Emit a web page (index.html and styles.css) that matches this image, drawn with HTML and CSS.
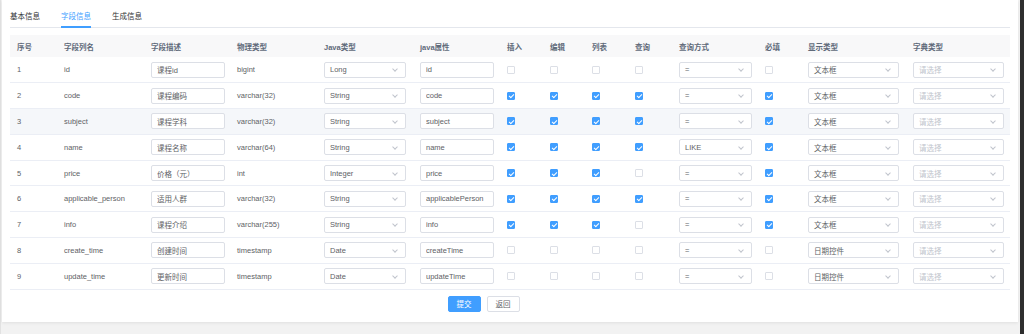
FILE: index.html
```html
<!DOCTYPE html>
<html lang="zh-CN">
<head>
    <meta charset="UTF-8">
    <meta name="viewport" content="width=device-width, initial-scale=1.0">
    <title>修改生成配置</title>
    <link rel="stylesheet" href="styles.css">
</head>
<body>
    <div class="main">
        <div class="card">
            <div class="tabs">
                <div class="tab first">基本信息</div>
                <div class="tab active">字段信息</div>
                <div class="tab last">生成信息</div>
            </div>

            <table class="fields">
                <colgroup>
                    <col style="width:47px"><col style="width:87px"><col style="width:86px"><col style="width:87px">
                    <col style="width:96px"><col style="width:87px"><col style="width:43px"><col style="width:42px">
                    <col style="width:43px"><col style="width:44px"><col style="width:86px"><col style="width:43px">
                    <col style="width:105px"><col style="width:104px">
                </colgroup>
                <thead>
                    <tr>
                        <th>序号</th><th>字段列名</th><th>字段描述</th><th>物理类型</th><th>Java类型</th><th>java属性</th>
                        <th>插入</th><th>编辑</th><th>列表</th><th>查询</th><th>查询方式</th><th>必填</th><th>显示类型</th><th>字典类型</th>
                    </tr>
                </thead>
                <tbody>
                    <tr>
                        <td>1</td><td>id</td>
                        <td><input class="input w-desc" value="课程id"></td>
                        <td>bigint</td>
                        <td><div class="select w-java"><span>Long</span></div></td>
                        <td><input class="input w-desc" value="id"></td>
                        <td><span class="checkbox"></span></td><td><span class="checkbox"></span></td>
                        <td><span class="checkbox"></span></td><td><span class="checkbox"></span></td>
                        <td><div class="select w-query"><span>=</span></div></td>
                        <td><span class="checkbox"></span></td>
                        <td><div class="select w-show"><span class="dark">文本框</span></div></td>
                        <td><div class="select w-show"><span class="placeholder">请选择</span></div></td>
                    </tr>
                    <tr>
                        <td>2</td><td>code</td>
                        <td><input class="input w-desc" value="课程编码"></td>
                        <td>varchar(32)</td>
                        <td><div class="select w-java"><span>String</span></div></td>
                        <td><input class="input w-desc" value="code"></td>
                        <td><span class="checkbox checked"></span></td><td><span class="checkbox checked"></span></td>
                        <td><span class="checkbox checked"></span></td><td><span class="checkbox checked"></span></td>
                        <td><div class="select w-query"><span>=</span></div></td>
                        <td><span class="checkbox checked"></span></td>
                        <td><div class="select w-show"><span class="dark">文本框</span></div></td>
                        <td><div class="select w-show"><span class="placeholder">请选择</span></div></td>
                    </tr>
                    <tr class="hover">
                        <td>3</td><td>subject</td>
                        <td><input class="input w-desc" value="课程学科"></td>
                        <td>varchar(32)</td>
                        <td><div class="select w-java"><span>String</span></div></td>
                        <td><input class="input w-desc" value="subject"></td>
                        <td><span class="checkbox checked"></span></td><td><span class="checkbox checked"></span></td>
                        <td><span class="checkbox checked"></span></td><td><span class="checkbox checked"></span></td>
                        <td><div class="select w-query"><span>=</span></div></td>
                        <td><span class="checkbox checked"></span></td>
                        <td><div class="select w-show"><span class="dark">文本框</span></div></td>
                        <td><div class="select w-show"><span class="placeholder">请选择</span></div></td>
                    </tr>
                    <tr>
                        <td>4</td><td>name</td>
                        <td><input class="input w-desc" value="课程名称"></td>
                        <td>varchar(64)</td>
                        <td><div class="select w-java"><span>String</span></div></td>
                        <td><input class="input w-desc" value="name"></td>
                        <td><span class="checkbox checked"></span></td><td><span class="checkbox checked"></span></td>
                        <td><span class="checkbox checked"></span></td><td><span class="checkbox checked"></span></td>
                        <td><div class="select w-query"><span>LIKE</span></div></td>
                        <td><span class="checkbox checked"></span></td>
                        <td><div class="select w-show"><span class="dark">文本框</span></div></td>
                        <td><div class="select w-show"><span class="placeholder">请选择</span></div></td>
                    </tr>
                    <tr>
                        <td>5</td><td>price</td>
                        <td><input class="input w-desc" value="价格（元）"></td>
                        <td>int</td>
                        <td><div class="select w-java"><span>Integer</span></div></td>
                        <td><input class="input w-desc" value="price"></td>
                        <td><span class="checkbox checked"></span></td><td><span class="checkbox checked"></span></td>
                        <td><span class="checkbox checked"></span></td><td><span class="checkbox"></span></td>
                        <td><div class="select w-query"><span>=</span></div></td>
                        <td><span class="checkbox checked"></span></td>
                        <td><div class="select w-show"><span class="dark">文本框</span></div></td>
                        <td><div class="select w-show"><span class="placeholder">请选择</span></div></td>
                    </tr>
                    <tr>
                        <td>6</td><td>applicable_person</td>
                        <td><input class="input w-desc" value="适用人群"></td>
                        <td>varchar(32)</td>
                        <td><div class="select w-java"><span>String</span></div></td>
                        <td><input class="input w-desc" value="applicablePerson"></td>
                        <td><span class="checkbox checked"></span></td><td><span class="checkbox checked"></span></td>
                        <td><span class="checkbox checked"></span></td><td><span class="checkbox checked"></span></td>
                        <td><div class="select w-query"><span>=</span></div></td>
                        <td><span class="checkbox checked"></span></td>
                        <td><div class="select w-show"><span class="dark">文本框</span></div></td>
                        <td><div class="select w-show"><span class="placeholder">请选择</span></div></td>
                    </tr>
                    <tr>
                        <td>7</td><td>info</td>
                        <td><input class="input w-desc" value="课程介绍"></td>
                        <td>varchar(255)</td>
                        <td><div class="select w-java"><span>String</span></div></td>
                        <td><input class="input w-desc" value="info"></td>
                        <td><span class="checkbox checked"></span></td><td><span class="checkbox checked"></span></td>
                        <td><span class="checkbox checked"></span></td><td><span class="checkbox"></span></td>
                        <td><div class="select w-query"><span>=</span></div></td>
                        <td><span class="checkbox checked"></span></td>
                        <td><div class="select w-show"><span class="dark">文本框</span></div></td>
                        <td><div class="select w-show"><span class="placeholder">请选择</span></div></td>
                    </tr>
                    <tr>
                        <td>8</td><td>create_time</td>
                        <td><input class="input w-desc" value="创建时间"></td>
                        <td>timestamp</td>
                        <td><div class="select w-java"><span>Date</span></div></td>
                        <td><input class="input w-desc" value="createTime"></td>
                        <td><span class="checkbox"></span></td><td><span class="checkbox"></span></td>
                        <td><span class="checkbox"></span></td><td><span class="checkbox"></span></td>
                        <td><div class="select w-query"><span>=</span></div></td>
                        <td><span class="checkbox"></span></td>
                        <td><div class="select w-show"><span class="dark">日期控件</span></div></td>
                        <td><div class="select w-show"><span class="placeholder">请选择</span></div></td>
                    </tr>
                    <tr>
                        <td>9</td><td>update_time</td>
                        <td><input class="input w-desc" value="更新时间"></td>
                        <td>timestamp</td>
                        <td><div class="select w-java"><span>Date</span></div></td>
                        <td><input class="input w-desc" value="updateTime"></td>
                        <td><span class="checkbox"></span></td><td><span class="checkbox"></span></td>
                        <td><span class="checkbox"></span></td><td><span class="checkbox"></span></td>
                        <td><div class="select w-query"><span>=</span></div></td>
                        <td><span class="checkbox"></span></td>
                        <td><div class="select w-show"><span class="dark">日期控件</span></div></td>
                        <td><div class="select w-show"><span class="placeholder">请选择</span></div></td>
                    </tr>
                </tbody>
            </table>

            <div class="actions">
                <button class="btn btn-primary">提交</button>
                <button class="btn">返回</button>
            </div>
        </div>
    </div>
    <div class="window-edge"></div>
</body>
</html>
```

FILE: styles.css
```css
* {
    margin: 0;
    padding: 0;
    box-sizing: border-box;
}

body {
    font-family: "Liberation Sans", "Noto Sans CJK SC", sans-serif;
    font-size: 7.5px;
    color: #606266;
    background: #f2f2f2;
    height: 334px;
    display: flex;
    overflow: hidden;
}

.main {
    flex: 1;
    border-left: 1px solid #e2e2e2;
    padding: 0 2px 0 1px;
    background: #f2f2f2;
}

.window-edge {
    width: 4px;
    background: #2e2e2e;
}

.card {
    background: #fff;
    height: 322px;
    padding: 7px 8px 0 8px;
    box-shadow: 0 1px 3px rgba(0, 0, 0, 0.08);
}

/* tabs */
.tabs {
    display: flex;
    border-bottom: 1px solid #e4e7ed;
}

.tab {
    position: relative;
    height: 20px;
    line-height: 20px;
    padding: 0 10.5px;
    color: #303133;
}

.tab.first {
    padding-left: 0;
}

.tab.active {
    color: #409eff;
}

.tab.active::after {
    content: "";
    position: absolute;
    left: 10.5px;
    right: 10.5px;
    bottom: -1px;
    height: 2px;
    background: #409eff;
}

/* table */
.fields {
    width: 1000px;
    margin-top: 7px;
    border-collapse: collapse;
    table-layout: fixed;
}

.fields th {
    height: 22px;
    padding: 0 7px;
    text-align: left;
    font-weight: bold;
    color: #606a7a;
    background: #f8f8f9;
    white-space: nowrap;
}

.fields td {
    height: 25.8px;
    padding: 0 7px;
    border-bottom: 1px solid #ebeef5;
    white-space: nowrap;
    vertical-align: middle;
}

.fields tr.hover td {
    background: #f5f7fa;
}

.input,
.select {
    height: 16px;
    border: 1px solid #dcdfe6;
    border-radius: 2px;
    background: #fff;
    font-family: inherit;
    font-size: 7.5px;
    color: #606266;
    padding: 0 5px;
    outline: none;
}

.select {
    position: relative;
    display: flex;
    align-items: center;
}

.select::after {
    content: "";
    position: absolute;
    right: 8px;
    top: 4.5px;
    width: 3px;
    height: 3px;
    border-right: 1px solid #c0c4cc;
    border-bottom: 1px solid #c0c4cc;
    transform: rotate(45deg);
}

.select .dark {
    color: #606266;
}

.select .placeholder {
    color: #c0c4cc;
}

.w-desc {
    width: 74px;
}

.w-java {
    width: 82px;
}

.w-query {
    width: 73px;
}

.w-show {
    width: 91px;
}

.checkbox {
    position: relative;
    display: block;
    width: 8px;
    height: 8px;
    border: 1px solid #dcdfe6;
    border-radius: 1px;
    background: #fff;
}

.checkbox.checked {
    background: #409eff;
    border-color: #409eff;
}

.checkbox.checked::after {
    content: "";
    position: absolute;
    left: 2px;
    top: 0.5px;
    width: 2px;
    height: 4px;
    border-right: 1px solid #fff;
    border-bottom: 1px solid #fff;
    transform: rotate(45deg);
}

/* buttons */
.actions {
    display: flex;
    justify-content: center;
    gap: 6px;
    padding: 6px 53px 0 0;
}

.btn {
    height: 16px;
    padding: 0 8px;
    border: 1px solid #dcdfe6;
    border-radius: 2px;
    background: #fff;
    color: #606266;
    font-family: inherit;
    font-size: 7.5px;
}

.btn-primary {
    background: #409eff;
    border-color: #409eff;
    color: #fff;
}
```
